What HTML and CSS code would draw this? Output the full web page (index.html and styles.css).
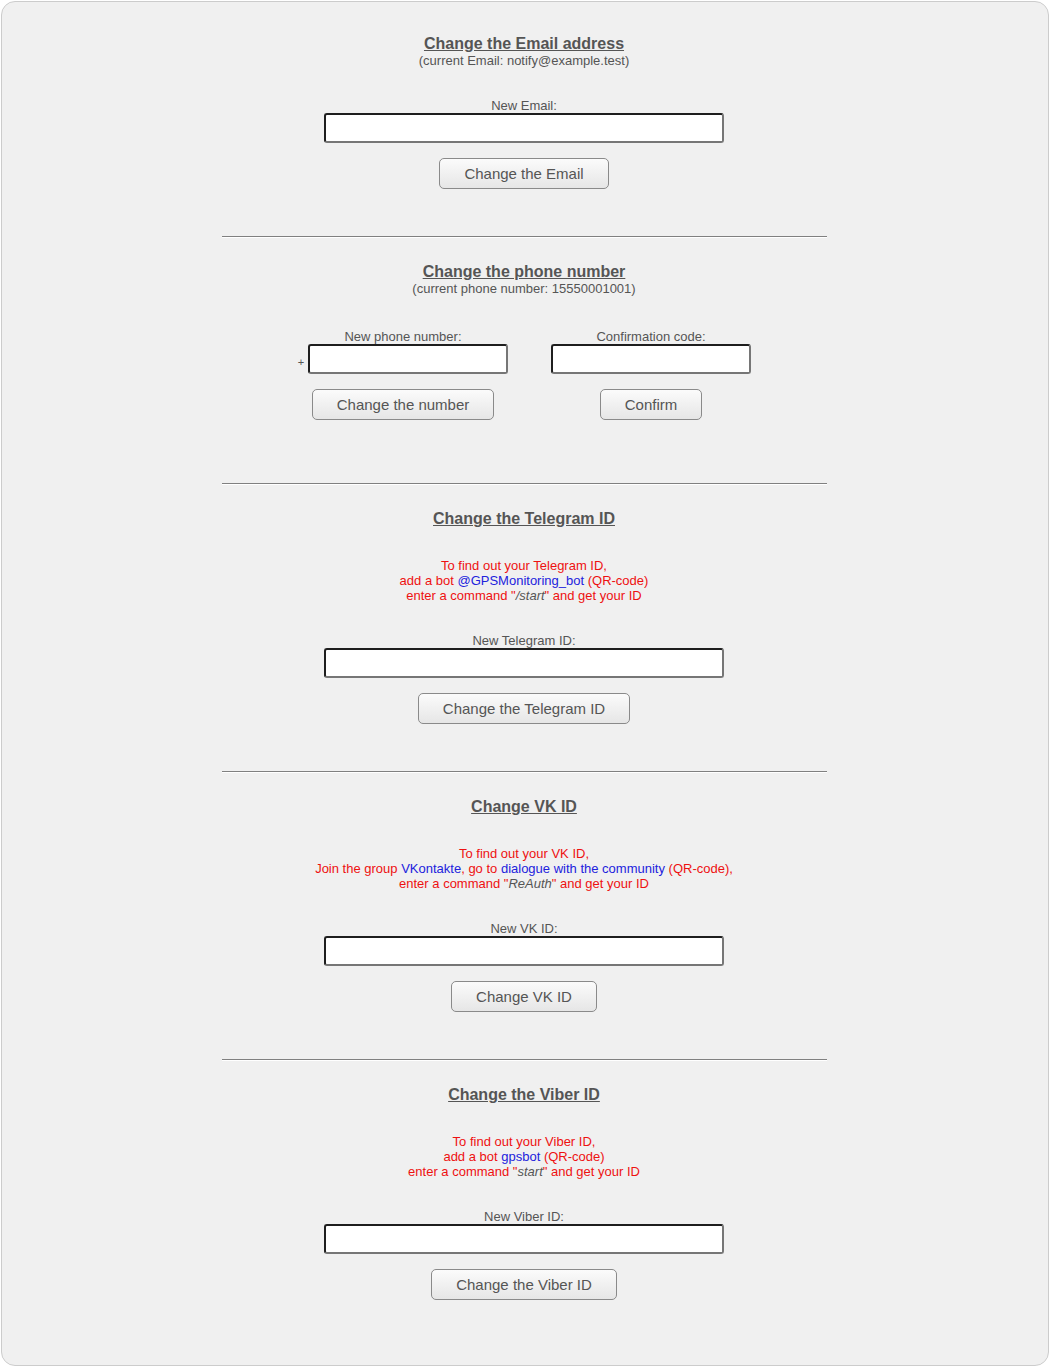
FILE: index.html
```html
<!DOCTYPE html>
<html>
<head>
<meta charset="utf-8">
<title>Settings</title>
<link rel="stylesheet" href="styles.css">
</head>
<body>
<div class="panel">

  <section class="section">
    <h2 class="title">Change the Email address</h2>
    <div class="sub">(current Email: notify@example.test)</div>
    <div class="field field-after-sub">
      <div class="label">New Email:</div>
      <input class="input wide" type="text">
      <div><button class="btn">Change the Email</button></div>
    </div>
  </section>

  <hr class="sep">

  <section class="section">
    <h2 class="title">Change the phone number</h2>
    <div class="sub">(current phone number: 15550001001)</div>
    <div class="phone-grid">
      <div class="col">
        <div class="label">New phone number:</div>
        <div class="plus-row"><span class="plus">+</span><input class="input narrow" type="text"></div>
        <div><button class="btn">Change the number</button></div>
      </div>
      <div class="col">
        <div class="label">Confirmation code:</div>
        <div class="plus-row"><input class="input narrow" type="text"></div>
        <div><button class="btn">Confirm</button></div>
      </div>
    </div>
  </section>

  <hr class="sep sep-phone">

  <section class="section">
    <h2 class="title">Change the Telegram ID</h2>
    <div class="info">
      To find out your Telegram ID,<br>
      add a bot <span class="link">@GPSMonitoring_bot</span> (QR-code)<br>
      enter a command "<em class="cmd">/start</em>" and get your ID
    </div>
    <div class="field">
      <div class="label">New Telegram ID:</div>
      <input class="input wide" type="text">
      <div><button class="btn">Change the Telegram ID</button></div>
    </div>
  </section>

  <hr class="sep">

  <section class="section">
    <h2 class="title">Change VK ID</h2>
    <div class="info">
      To find out your VK ID,<br>
      Join the group <span class="link">VKontakte</span>, go to <span class="link">dialogue with the community</span> (QR-code),<br>
      enter a command "<em class="cmd">ReAuth</em>" and get your ID
    </div>
    <div class="field">
      <div class="label">New VK ID:</div>
      <input class="input wide" type="text">
      <div><button class="btn">Change VK ID</button></div>
    </div>
  </section>

  <hr class="sep">

  <section class="section">
    <h2 class="title">Change the Viber ID</h2>
    <div class="info">
      To find out your Viber ID,<br>
      add a bot <span class="link">gpsbot</span> (QR-code)<br>
      enter a command "<em class="cmd">start</em>" and get your ID
    </div>
    <div class="field">
      <div class="label">New Viber ID:</div>
      <input class="input wide" type="text">
      <div><button class="btn">Change the Viber ID</button></div>
    </div>
  </section>

</div>
</body>
</html>
```

FILE: styles.css
```css
html, body {
  background: #ffffff;
}
body {
  margin: 1px;
  font-family: "Liberation Sans", Arial, sans-serif;
  color: #555555;
}
.panel {
  background: #f0f0f0;
  border: 1px solid #cccccc;
  border-radius: 14px;
  padding: 33px 2px 65px 0;
  width: 1044px;
  box-sizing: content-box;
}
.section {
  text-align: center;
}
.title {
  margin: 0;
  font-size: 16px;
  line-height: 18px;
  font-weight: bold;
  text-decoration: underline;
  color: #555555;
}
.sub {
  font-size: 13px;
  line-height: 16px;
}
.field {
  margin-top: 30px;
}
.field-after-sub {
  margin-top: 29px;
}
.label {
  font-size: 13px;
  line-height: 15px;
}
.input {
  display: inline-block;
  vertical-align: top;
  box-sizing: border-box;
  height: 30px;
  margin: 0;
  padding: 0 4px;
  background: #ffffff;
  border-width: 2px;
  border-style: solid;
  border-color: #1e1e1e #767676 #767676 #1e1e1e;
  border-radius: 3px;
  font-family: "Liberation Sans", Arial, sans-serif;
  font-size: 13px;
}
.wide {
  width: 400px;
}
.narrow {
  width: 200px;
}
.btn {
  margin-top: 15px;
  height: 31px;
  padding: 0 24px;
  border: 1px solid #8a8a8a;
  border-radius: 5px;
  background: linear-gradient(#fbfbfb, #e6e6e6);
  color: #555555;
  font-family: "Liberation Sans", Arial, sans-serif;
  font-size: 15px;
  line-height: 29px;
}
.sep {
  width: 605px;
  height: 0;
  border: 0;
  border-top: 1px solid #808080;
  border-bottom: 1px solid #ffffff;
  margin: 47px auto 25px;
}
.sep-phone {
  margin-top: 63px;
}
.phone-grid {
  display: grid;
  grid-template-columns: 248px 248px;
  justify-content: center;
  padding-left: 6px;
  margin-top: 32px;
}
.col {
  text-align: center;
}
.plus-row {
  display: flex;
  justify-content: center;
  align-items: flex-end;
  gap: 4px;
}
.plus {
  font-size: 11px;
  line-height: 13px;
  margin-bottom: 5px;
}
.info {
  margin-top: 30px;
  font-size: 13px;
  line-height: 15px;
  color: #ee1111;
}
.link {
  color: #2222dd;
}
.cmd {
  color: #555555;
  font-style: italic;
}
```
